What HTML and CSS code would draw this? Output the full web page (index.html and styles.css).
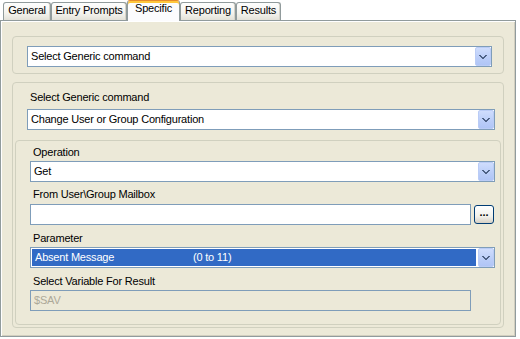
FILE: index.html
```html
<!DOCTYPE html>
<html>
<head>
<meta charset="utf-8">
<link rel="stylesheet" href="styles.css">
</head>
<body>
<div class="tabs">
  <div class="tab t-general">General</div>
  <div class="tab t-entry">Entry Prompts</div>
  <div class="tab tab-active t-specific">Specific</div>
  <div class="tab t-reporting">Reporting</div>
  <div class="tab t-results">Results</div>
</div>
<div class="panel">
  <div class="group g1">
    <div class="combo">
      <span class="combo-text">Select Generic command</span>
      <span class="drop"><svg width="8" height="4" viewBox="0 0 8 4" shape-rendering="crispEdges"><path d="M0 0h2v1H0zM6 0h2v1H6zM1 1h2v1H1zM5 1h2v1H5zM2 2h4v1H2zM3 3h2v1H3z" fill="#4D6185"/></svg></span>
    </div>
  </div>
  <div class="group g2">
    <div class="g2-head">
      <div class="label label-head">Select Generic command</div>
      <div class="combo">
        <span class="combo-text">Change User or Group Configuration</span>
        <span class="drop"><svg width="8" height="4" viewBox="0 0 8 4" shape-rendering="crispEdges"><path d="M0 0h2v1H0zM6 0h2v1H6zM1 1h2v1H1zM5 1h2v1H5zM2 2h4v1H2zM3 3h2v1H3z" fill="#4D6185"/></svg></span>
      </div>
    </div>
    <div class="group g3">
      <div class="label">Operation</div>
      <div class="combo gap-6">
        <span class="combo-text">Get</span>
        <span class="drop"><svg width="8" height="4" viewBox="0 0 8 4" shape-rendering="crispEdges"><path d="M0 0h2v1H0zM6 0h2v1H6zM1 1h2v1H1zM5 1h2v1H5zM2 2h4v1H2zM3 3h2v1H3z" fill="#4D6185"/></svg></span>
      </div>
      <div class="label label-3">From User\Group Mailbox</div>
      <div class="input-row gap-7">
        <div class="input"></div>
        <div class="btn">...</div>
      </div>
      <div class="label">Parameter</div>
      <div class="combo combo-sel gap-7">
        <span class="combo-text"><span class="col1">Absent Message</span><span>(0 to 11)</span></span>
        <span class="drop"><svg width="8" height="4" viewBox="0 0 8 4" shape-rendering="crispEdges"><path d="M0 0h2v1H0zM6 0h2v1H6zM1 1h2v1H1zM5 1h2v1H5zM2 2h4v1H2zM3 3h2v1H3z" fill="#4D6185"/></svg></span>
      </div>
      <div class="label">Select Variable For Result</div>
      <div class="input input-disabled">$SAV</div>
    </div>
  </div>
</div>
</body>
</html>
```

FILE: styles.css
```css
* { box-sizing: border-box; }
html, body {
  margin: 0;
  padding: 0;
  background: #FFFFFF;
}
body {
  font-family: "Liberation Sans", Arial, sans-serif;
  font-size: 11px;
  letter-spacing: -0.2px;
  color: #000;
  width: 520px;
  height: 339px;
  overflow: hidden;
}

/* ---- tabs ---- */
.tabs {
  display: flex;
  align-items: flex-end;
  height: 20px;
  padding-left: 3px;
}
.tab {
  height: 18px;
  border: 1px solid #919B9C;
  border-bottom: none;
  border-radius: 3px 3px 0 0;
  background: linear-gradient(#FEFEFE, #F4F3EE 60%, #E3E1D8);
  box-shadow: inset -1px 0 0 #D6D3C8;
  text-align: center;
  line-height: 13px;
  padding-top: 1px;
  white-space: nowrap;
}
.t-general { width: 48px; }
.t-entry { width: 76px; }
.t-specific { width: 53px; }
.t-reporting { width: 56px; }
.t-results { width: 45px; }
.tab-active {
  height: 21px;
  margin-bottom: -1px;
  position: relative;
  z-index: 1;
  background: #FCFCFE;
  border-top: 1px solid #E68B2C;
  box-shadow: inset 0 2px 0 #FFC73C;
  padding-top: 1px;
}

/* ---- panel ---- */
.panel {
  width: 516px;
  height: 317px;
  border: 1px solid #919B9C;
  background: #ECE9D8;
  box-shadow: inset 1px 1px 0 #FFFFFF, inset -1px -1px 0 #D2CEBF;
  padding: 15px 11px 8px 11px;
  display: flex;
  flex-direction: column;
  gap: 8px;
}

.group {
  border: 1px solid #D0D0BF;
  border-radius: 4px;
}
.g1 {
  padding: 9px 11px 6px 14px;
}
.g2 {
  padding: 8px 2px 2px 2px;
  display: flex;
  flex-direction: column;
}
.g2-head {
  padding: 0 6px 0 12px;
  margin-bottom: 10px;
}
.g3 {
  padding: 5px 5px 13px 14px;
  display: flex;
  flex-direction: column;
}

.label {
  height: 13px;
  line-height: 13px;
  padding-left: 3px;
  white-space: nowrap;
  margin-bottom: 2px;
}
.label-head { margin-bottom: 5px; }
.label-3 { margin-bottom: 3px; }
.gap-6 { margin-bottom: 6px; }
.gap-7 { margin-bottom: 7px; }

/* ---- combo ---- */
.combo {
  display: flex;
  height: 21px;
  border: 1px solid #7F9DB9;
  background: #FFFFFF;
}
.combo-text {
  flex: 1;
  padding-left: 3px;
  line-height: 18px;
  white-space: nowrap;
  overflow: hidden;
}
.drop {
  width: 16px;
  border: 1px solid #BACCF6;
  border-radius: 2px;
  background: linear-gradient(#CFDDFD, #BACDF8 60%, #B0C5F6);
  display: flex;
  align-items: center;
  justify-content: center;
}
.drop svg { display: block; }

.combo-sel .combo-text {
  background: #316AC5;
  color: #FFFFFF;
  margin: 1px 2px 1px 1px;
  padding-left: 3px;
  line-height: 16px;
}
.col1 {
  display: inline-block;
  width: 158px;
}

/* ---- inputs ---- */
.input-row {
  display: flex;
  height: 21px;
  gap: 3px;
}
.input {
  flex: 1;
  height: 21px;
  border: 1px solid #7F9DB9;
  background: #FFFFFF;
  padding-left: 3px;
  line-height: 18px;
}
.input-disabled {
  flex: none;
  width: 441px;
  background: #ECE9D8;
  color: #ACA899;
}
.btn {
  width: 20px;
  height: 19px;
  margin-top: 1px;
  margin-right: 1px;
  border: 1px solid #003C74;
  border-radius: 3px;
  background: linear-gradient(#FFFFFF, #F3F2EC 60%, #D6D0C5);
  font-weight: bold;
  text-align: center;
  line-height: 13px;
  letter-spacing: 0;
}
```
